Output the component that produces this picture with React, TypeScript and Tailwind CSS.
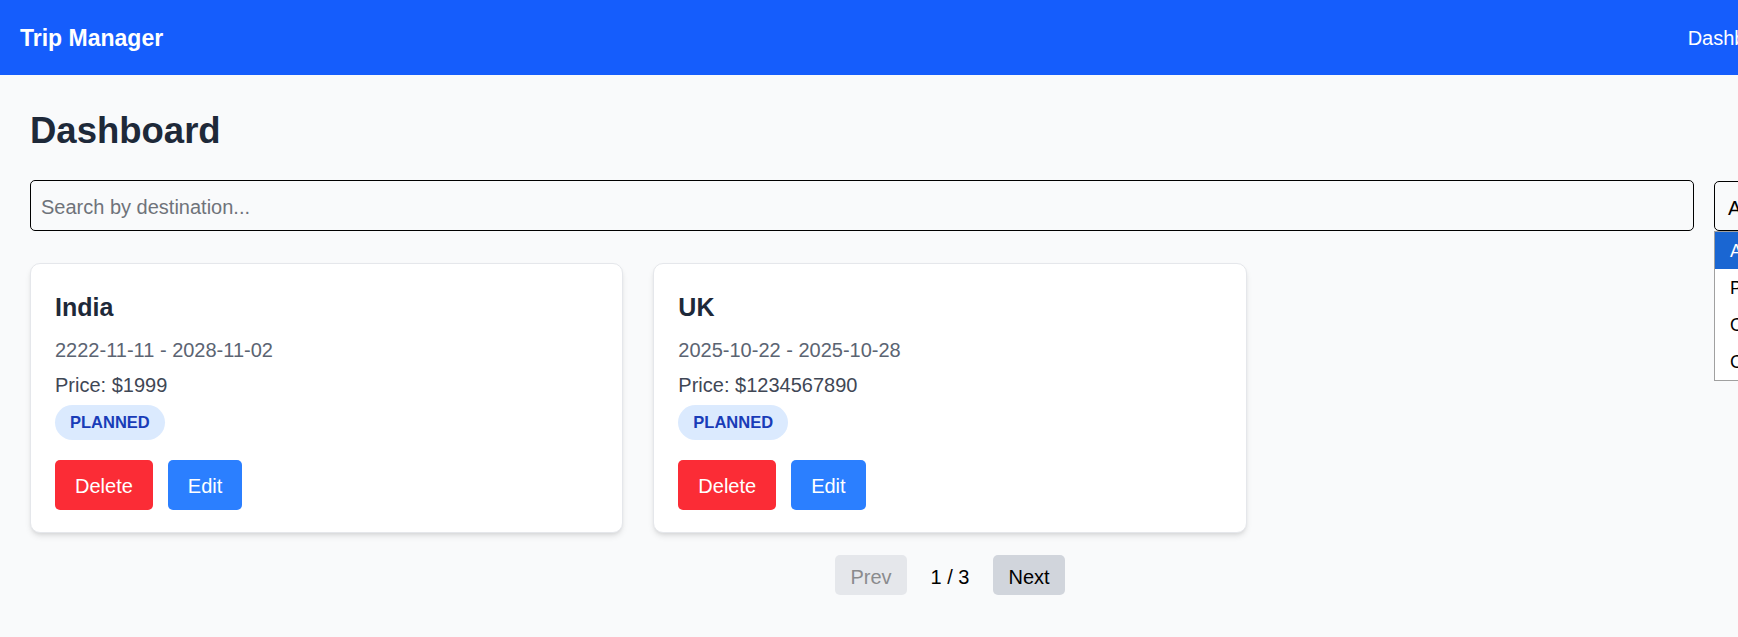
import { useState } from "react";

type Trip = {
  id: number;
  destination: string;
  startDate: string;
  endDate: string;
  price: number;
  status: string;
};

const trips: Trip[] = [
  { id: 1, destination: "India", startDate: "2222-11-11", endDate: "2028-11-02", price: 1999, status: "PLANNED" },
  { id: 2, destination: "UK", startDate: "2025-10-22", endDate: "2025-10-28", price: 1234567890, status: "PLANNED" },
];

const statusOptions = ["All", "Planned", "Ongoing", "Completed"];

const TripCard = ({ trip }: { trip: Trip }) => (
  <div className="rounded-[10px] border border-[#e5e7eb] bg-white px-[24px] pt-[26px] pb-[22px] shadow-md">
    <h2 className="mb-[10px] text-[25px] leading-[35px] font-semibold text-[#1e2939]">
      {trip.destination}
    </h2>
    <p className="mb-[5px] text-[20px] leading-[30px] text-[#5b6472]">
      {trip.startDate} - {trip.endDate}
    </p>
    <p className="text-[20px] leading-[30px] text-[#3f4755]">Price: ${trip.price}</p>
    <div className="mt-[5px] flex">
      <span className="rounded-full bg-[#dbeafe] px-[15px] py-[5px] text-[16.5px] leading-[25px] font-semibold text-[#193cb8]">
        {trip.status}
      </span>
    </div>
    <div className="mt-[20px] flex gap-[15px]">
      <button className="h-[50px] rounded-[5px] bg-[#fb2c36] px-[20px] pt-[2px] text-[20px] text-white">
        Delete
      </button>
      <button className="h-[50px] rounded-[5px] bg-[#2b7fff] px-[20px] pt-[2px] text-[20px] text-white">
        Edit
      </button>
    </div>
  </div>
);

export default function App() {
  const [search, setSearch] = useState("");
  const [status, setStatus] = useState("All");
  const [page] = useState(1);

  return (
    <div className="min-h-screen w-full overflow-hidden bg-[#f9fafb] font-['Liberation_Sans',Arial,sans-serif] text-black">
      <div className="w-[1900px]">
        {/* Navbar */}
        <nav className="flex h-[75px] items-center justify-between bg-[#155dfc] px-[20px] text-white">
          <span className="pt-[2px] text-[23px] leading-[35px] font-bold">Trip Manager</span>
          <div className="flex gap-[20px] text-[20px] leading-[30px]">
            <a href="#">Dashboard</a>
            <a href="#">Add Trip</a>
          </div>
        </nav>

        <main className="px-[30px] pt-[33px] pb-[30px]">
          <h1 className="mb-[27px] text-[36.5px] leading-[45px] font-bold text-[#1e2939]">Dashboard</h1>

          {/* Search and filter */}
          <div className="mb-[32px] flex gap-[20px]">
            <input
              type="text"
              value={search}
              onChange={(e) => setSearch(e.target.value)}
              placeholder="Search by destination..."
              className="h-[51px] flex-1 rounded-[5px] border border-black bg-transparent px-[10px] pt-[4px] text-[20px] outline-none placeholder:text-[#6f737a]"
            />
            <div className="relative w-[156px]">
              <div className="mt-[1px] flex h-[50px] items-center rounded-[5px] border border-black px-[13px] pt-[3px] text-[20px]">
                {status}
              </div>
              <ul className="absolute top-[51px] left-0 z-10 w-full border border-[#a0a0a0] bg-white text-[18px]">
                {statusOptions.map((opt, i) => (
                  <li
                    key={opt}
                    onClick={() => setStatus(opt)}
                    className={`flex h-[37px] items-center pt-[2px] pl-[15px] ${
                      i === 0 ? "bg-[#1a66d2] text-white" : "text-black"
                    }`}
                  >
                    {opt}
                  </li>
                ))}
              </ul>
            </div>
          </div>

          {/* Trip cards */}
          <div className="grid grid-cols-3 gap-[30px]">
            {trips.map((trip) => (
              <TripCard key={trip.id} trip={trip} />
            ))}
          </div>

          {/* Pagination */}
          <div className="mt-[22px] flex items-center justify-center gap-[24px] text-[20px]">
            <button disabled className="h-[40px] rounded-[5px] bg-[#e5e7eb] px-[15px] pt-[3px] text-[#8a8b8d]">
              Prev
            </button>
            <span className="pt-[3px]">
              {page} / 3
            </span>
            <button className="h-[40px] rounded-[5px] bg-[#d1d5dc] px-[15px] pt-[3px] text-black">Next</button>
          </div>
        </main>
      </div>
    </div>
  );
}
